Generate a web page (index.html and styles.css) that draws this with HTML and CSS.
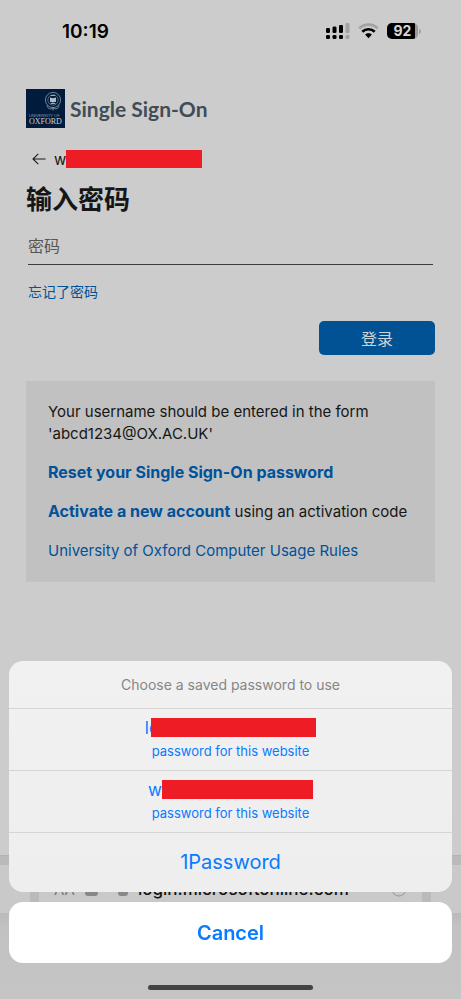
FILE: index.html
```html
<!DOCTYPE html>
<html lang="zh-CN">
<head>
  <meta charset="UTF-8">
  <meta name="viewport" content="width=device-width, initial-scale=1">
  <title>Single Sign-On</title>
  <link rel="stylesheet" href="styles.css">
</head>
<body>

  <header class="status-bar">
    <time class="clock">10:19</time>
    <div class="status-icons">
      <svg class="signal" width="24" height="17" viewBox="0 0 24 17" aria-hidden="true">
        <g fill="#000">
          <rect x="0" y="5" width="4" height="5" rx="1.3"/>
          <rect x="6.5" y="3.5" width="4" height="6.5" rx="1.3"/>
          <rect x="13" y="2" width="4" height="8" rx="1.3"/>
          <rect x="0" y="12" width="4" height="4" rx="1.3"/>
          <rect x="6.5" y="12" width="4" height="4" rx="1.3"/>
          <rect x="13" y="12" width="4" height="4" rx="1.3"/>
        </g>
        <g fill="#a3a3a3">
          <rect x="19.5" y="0" width="4" height="10" rx="1.3"/>
          <rect x="19.5" y="12" width="4" height="4" rx="1.3"/>
        </g>
      </svg>
      <svg class="wifi" width="21" height="16" viewBox="0 0 21 16" aria-hidden="true">
        <g fill="none" stroke-width="2.7">
          <path d="M1.2 5.4C6.3 .3 14.7 .3 19.8 5.4" stroke="#a3a3a3"/>
          <path d="M4.3 8.8C7.7 5.4 13.3 5.4 16.7 8.8" stroke="#000"/>
        </g>
        <path d="M7.1 11.6C9 9.8 12 9.8 13.9 11.6L10.5 15.2Z" fill="#000"/>
      </svg>
      <div class="battery"><span class="battery-level">92</span></div>
    </div>
  </header>

  <main class="page">
    <div class="brand">
      <svg width="39" height="39" viewBox="0 0 39 39" role="img" aria-label="University of Oxford">
        <rect width="39" height="39" fill="#001b3b"/>
        <g fill="none" stroke="#9eabb7">
          <circle cx="27" cy="11" r="7.6" stroke-width=".7"/>
          <circle cx="27" cy="11" r="5.2" stroke-width=".5"/>
          <path d="M21 16.5c1 4 4 4 6 2.2M33 16.5c-1 4-4 4-6 2.2M27 18.5v3" stroke-width=".8"/>
          <path d="M24.8 6.5h4.4M24.6 14.5h4.8" stroke-width="1"/>
        </g>
        <path d="M24 8.5l3 .8 3-.8v4.3l-3 .7-3-.7z" fill="#b4bec7"/>
        <text x="3" y="28" class="logo-small">UNIVERSITY OF</text>
        <text x="3" y="35" class="logo-large">OXFORD</text>
      </svg>
      <span class="brand-name">Single Sign-On</span>
    </div>

    <div class="identity">
      <button class="back" type="button" aria-label="返回">
        <svg width="14" height="12" viewBox="0 0 14 12" fill="none" stroke="#1b1b1b" stroke-width="1.1">
          <path d="M6.3 .8L1 6l5.3 5.2M1 6h12.6"/>
        </svg>
      </button>
      <span>w</span><span class="redacted redacted-user"></span>
    </div>

    <h1>输入密码</h1>

    <form class="login">
      <input class="password" type="password" placeholder="密码" aria-label="密码">
      <a class="forgot" href="#">忘记了密码</a>
      <button class="submit" type="button">登录</button>
    </form>

    <section class="notes" lang="en">
      <p>Your username should be entered in the form 'abcd1234@OX.AC.UK'</p>
      <p><a href="#"><b>Reset your Single Sign-On password</b></a></p>
      <p><a href="#"><b>Activate a new account</b></a> using an activation code</p>
      <p><a href="#">University of Oxford Computer Usage Rules</a></p>
    </section>
  </main>

  <footer class="browser-bar">
    <div class="tabs">
      <div class="tab tab-side"></div>
      <div class="tab tab-current">
        <span class="text-size">AA</span>
        <span class="extension"></span>
        <span class="lock"></span>
        <span class="address">login.microsoftonline.com</span>
        <svg class="reload" width="16" height="16" viewBox="0 0 16 16" fill="none" stroke="#999" aria-hidden="true"><circle cx="8" cy="8" r="7"/></svg>
      </div>
      <div class="tab tab-side"></div>
    </div>
  </footer>

  <div class="sheet" role="dialog" aria-labelledby="sheet-title" lang="en">
    <div class="choices">
      <p class="sheet-title" id="sheet-title">Choose a saved password to use</p>
      <button class="choice" type="button">
        <span class="account">lo<span class="redacted redacted-first"></span></span>
        <span class="hint">password for this website</span>
      </button>
      <button class="choice" type="button">
        <span class="account">w<span class="redacted redacted-second"></span></span>
        <span class="hint">password for this website</span>
      </button>
      <button class="choice choice-app" type="button">1Password</button>
    </div>
    <button class="cancel" type="button">Cancel</button>
    <div class="home-indicator"></div>
  </div>

</body>
</html>
```

FILE: styles.css
```css
* { box-sizing: border-box; }
body { margin: 0; min-height: 100vh; display: flex; flex-direction: column; background: #ccc; color: #161616; font-family: Inter, "Noto Sans CJK SC", sans-serif; font-size: 16px; }
button, input { font: inherit; border: 0; padding: 0; margin: 0; background: none; color: inherit; }
button { cursor: pointer; }
p, h1 { margin: 0; }
a { color: #00529a; text-decoration: none; }

.status-bar { display: flex; justify-content: space-between; align-items: center; height: 62px; padding: 0 40px 0 62px; color: #000; }
.clock { font-size: 19px; font-weight: 600; }
.status-icons { display: flex; align-items: center; gap: 8px; }
.battery { display: flex; align-items: center; gap: 1px; }
.battery-level { width: 31px; height: 16px; border-radius: 5px; background: linear-gradient(90deg, #000 28px, #999 28px); color: #d6d6d6; font-size: 14px; font-weight: 700; line-height: 16px; text-align: center; }
.battery::after { content: ""; width: 2px; height: 5px; border-radius: 0 2px 2px 0; background: #a3a3a3; }

.page { flex: 1; padding: 27px 26px 0; }
.brand { display: flex; align-items: center; gap: 5px; }
.brand-name { color: #414c57; font-family: Lato, "Open Sans", sans-serif; font-size: 21px; font-weight: 700; line-height: 39px; }
.logo-small { fill: #8f9baa; font-family: "Liberation Sans", sans-serif; font-size: 4px; }
.logo-large { fill: #cbd0d5; font-family: "Liberation Serif", serif; font-size: 8px; }

.identity { display: flex; align-items: center; height: 20px; margin-top: 21px; padding-left: 6px; font-size: 15px; }
.back { width: 22px; height: 20px; text-align: left; }
.back svg { display: block; }
.redacted { display: inline-block; background: #ee1c24; }
.redacted-user { width: 136px; height: 18px; }
h1 { margin-top: 11px; font-size: 26px; font-weight: 600; line-height: 40px; }

.login { display: flex; flex-direction: column; padding: 7px 0 0 2px; }
.password { width: calc(100% - 2px); height: 38px; border-bottom: 1px solid #3d3d3d; border-radius: 0; outline: 0; }
.password::placeholder { color: #555; opacity: 1; }
.forgot { align-self: flex-start; margin-top: 17px; font-size: 14px; line-height: 20px; }
.submit { align-self: flex-end; width: 116px; height: 34px; margin-top: 19px; border-radius: 5px; background: #005295; color: #d0d4d8; }

.notes { display: flex; flex-direction: column; gap: 17px; margin-top: 26px; padding: 20px 20px 20px 22px; background: #c1c1c1; font-size: 15px; line-height: 22px; }
.notes b { font-size: 16px; line-height: 20px; }

.browser-bar { height: 144px; padding-top: 9px; border-top: 1px solid #b3b3b3; background: linear-gradient(#bababa, #bababa 56px, #c2c2c2 72px, #c5c5c5); }
.tabs { display: flex; gap: 9px; }
.tab { height: 48px; background: #c9c9c9; }
.tab-side { width: 30px; }
.tab-current { flex: 1; display: flex; align-items: center; gap: 10px; padding: 0 15px; }
.text-size { color: #777; font-size: 15px; }
.extension, .lock { width: 13px; height: 13px; border-radius: 3px; background: #888; }
.lock { width: 10px; margin-left: 10px; }
.address { color: #111; font-size: 17px; font-weight: 500; }
.reload { margin-left: auto; }

.sheet { position: fixed; left: 9px; right: 9px; bottom: 9px; }
.choices { overflow: hidden; border-radius: 14px; background: linear-gradient(#f1f1f1, #eee); color: #087bff; }
.sheet-title { padding: 14px 0 13px; color: #868686; font-size: 14px; line-height: 20px; text-align: center; }
.choice { display: flex; flex-direction: column; align-items: center; justify-content: center; width: 100%; height: 62px; padding-bottom: 2px; border-top: 1px solid #d5d5d5; }
.account { display: flex; align-items: center; height: 20px; font-size: 17px; }
.redacted-first { width: 165px; height: 19px; margin-left: -8px; }
.redacted-second { width: 151px; height: 19px; }
.hint { margin-top: 4px; font-size: 13px; line-height: 18px; }
.choice-app { height: 60px; font-size: 20px; }
.cancel { display: block; width: 100%; height: 61px; margin-top: 10px; border-radius: 14px; background: #fff; color: #087bff; font-size: 20px; font-weight: 600; }
.home-indicator { width: 165px; height: 5px; margin: 22px auto 0; border-radius: 3px; background: #444; }
```
